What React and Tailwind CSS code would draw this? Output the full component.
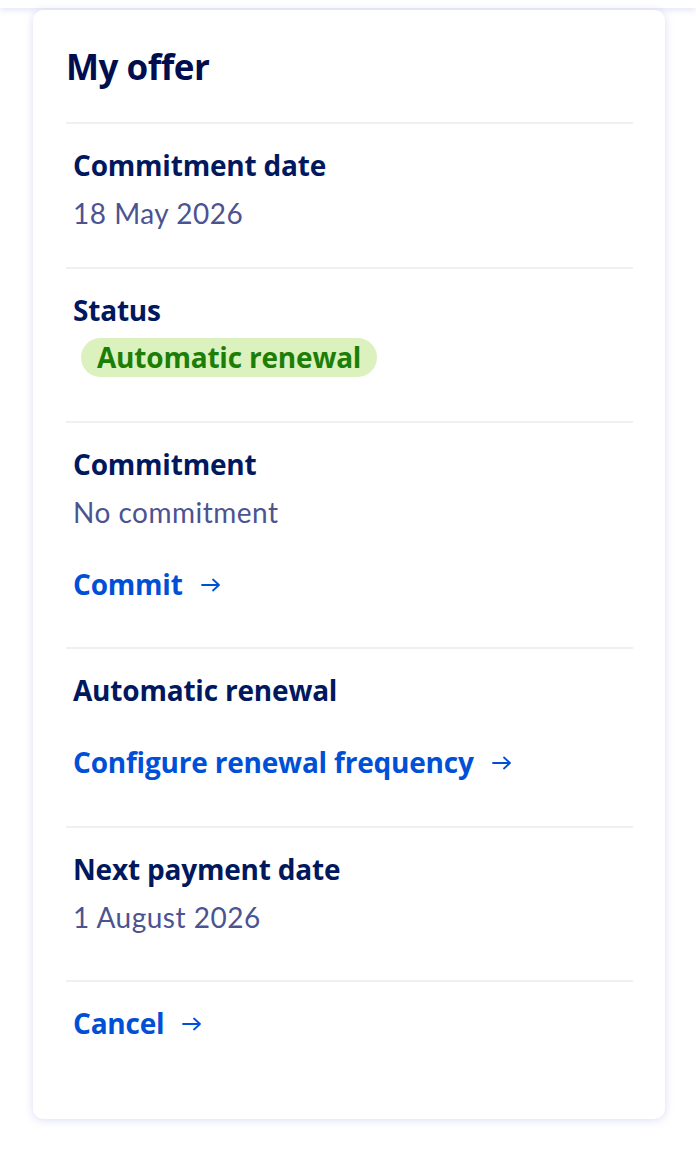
const base = { fontFamily: 'Lato, "Noto Sans", sans-serif' };
const strong = { fontFamily: '"Open Sans", Lato, sans-serif' };

function Arrow() {
  return (
    <svg width="20" height="14" viewBox="0 0 20 14" fill="none" className="ml-[18px] mt-[2px]">
      <path d="M1 7h17M12 1.5L18 7l-6 5.5" stroke="currentColor" strokeWidth="1.8" strokeLinecap="round" strokeLinejoin="round" />
    </svg>
  );
}

function Label({ children }) {
  return (
    <p className="text-[28px] font-bold leading-[48px] tracking-[-0.2px] text-[#00185e]" style={strong}>
      {children}
    </p>
  );
}

function Value({ children }) {
  return <p className="text-[28px] leading-[48px] tracking-[0.5px] text-[#4c5391]">{children}</p>;
}

function LinkRow({ children, className = "" }) {
  return (
    <a
      href="#"
      className={`flex items-center text-[28px] font-bold leading-[48px] tracking-[-0.2px] text-[#0050d7] ${className}`}
      style={strong}
    >
      {children}
      <Arrow />
    </a>
  );
}

function Section({ children, className = "" }) {
  return <div className={`border-t-2 border-[#eff0f3] px-[7px] pt-[17px] ${className}`}>{children}</div>;
}

export default function App() {
  return (
    <div className="min-h-[1150px] bg-white" style={base}>
      <div className="h-[8px] bg-white shadow-[0_2px_6px_rgba(170,175,230,0.35)]" />
      <div className="pl-[33px] pr-[31px] pt-[2px]">
        <div className="rounded-[10px] bg-white pl-[33px] pr-[32px] pt-[35px] pb-[72px] shadow-[0_1px_8px_rgba(150,155,225,0.35)]">
          <h2 className="pb-[33px] text-[35px] font-bold leading-[44px] tracking-[-0.5px] text-[#000e50]" style={strong}>
            My offer
          </h2>

          <Section className="pb-[30px]">
            <Label>Commitment date</Label>
            <Value>18 May 2026</Value>
          </Section>

          <Section className="pb-[44px]">
            <Label>Status</Label>
            <span
              className="ml-[8px] mt-[4px] inline-block rounded-full bg-[#dbf2bf] px-[16px] text-[28px] font-bold leading-[39px] tracking-[-0.2px] text-[#1c7e06]"
              style={strong}
            >
              Automatic renewal
            </span>
          </Section>

          <Section className="pb-[39px]">
            <Label>Commitment</Label>
            <Value>No commitment</Value>
            <LinkRow className="mt-[24px]">Commit</LinkRow>
          </Section>

          <Section className="pb-[40px]">
            <Label>Automatic renewal</Label>
            <LinkRow className="mt-[24px]">Configure renewal frequency</LinkRow>
          </Section>

          <Section className="pb-[39px]">
            <Label>Next payment date</Label>
            <Value>1 August 2026</Value>
          </Section>

          <Section>
            <LinkRow>Cancel</LinkRow>
          </Section>
        </div>
      </div>
    </div>
  );
}
